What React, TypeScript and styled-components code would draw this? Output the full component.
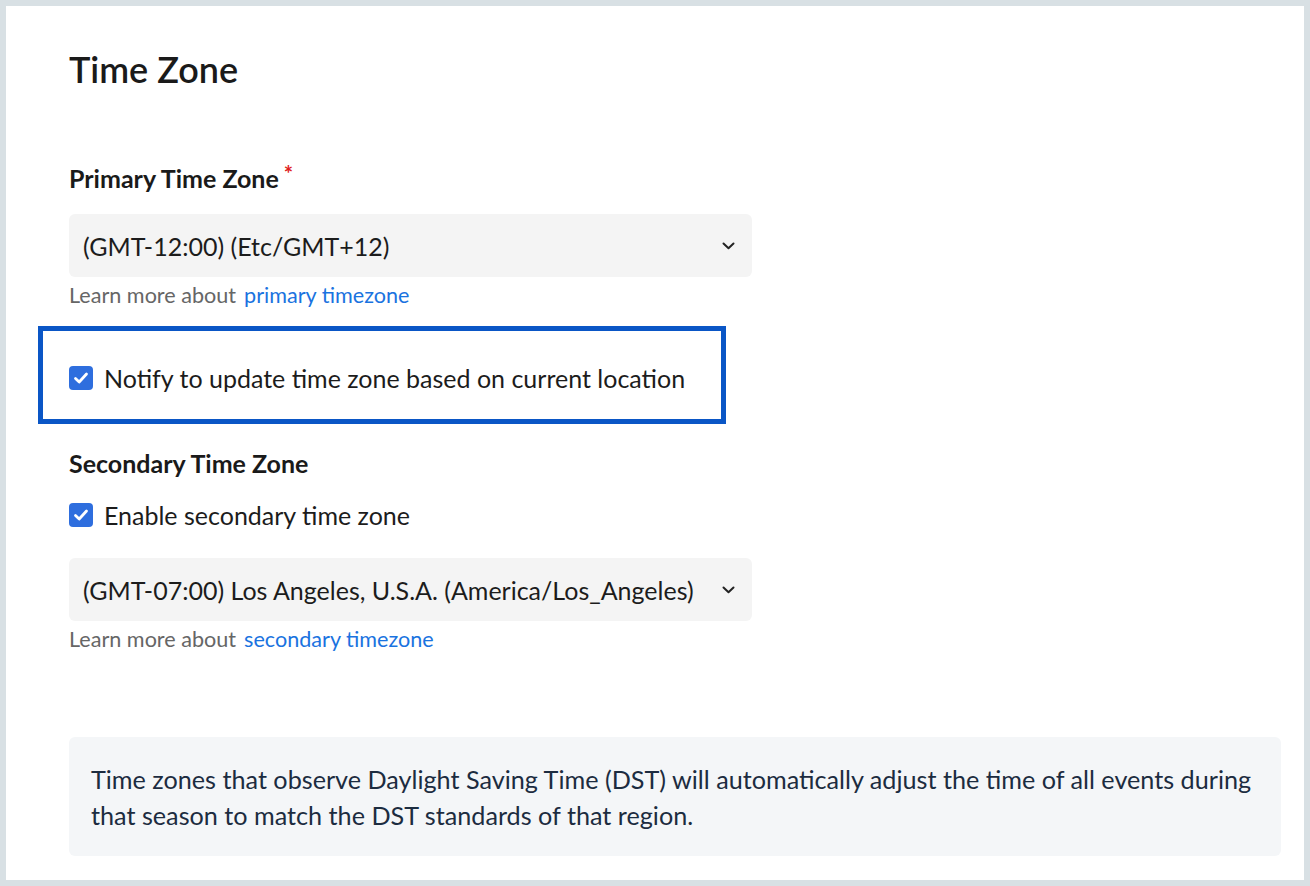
import styled, { createGlobalStyle } from 'styled-components';

const GlobalStyle = createGlobalStyle`
	html, body {
		margin: 0;
		padding: 0;
		background: #d8e0e4;
	}
	body {
		font-family: Lato, 'Noto Sans', sans-serif;
		color: #1c1c1c;
	}
`;

const Frame = styled.div`
	box-sizing: border-box;
	width: 1310px;
	height: 886px;
	padding: 6px;
	background: #d8e0e4;
`;

const Panel = styled.div`
	box-sizing: border-box;
	height: 100%;
	background: #fff;
	padding: 41px 23px 0 63px;
	display: flex;
	flex-direction: column;
`;

const Title = styled.h1`
	margin: 0;
	font-size: 36px;
	font-weight: 600;
	line-height: 44px;
	color: #1a1a1a;
`;

const Label = styled.div<{ $top: number }>`
	margin-top: ${(p) => p.$top}px;
	font-size: 25px;
	font-weight: 700;
	line-height: 30px;
	color: #1a1a1a;

	.label__required {
		color: #e0201b;
		font-size: 22px;
		font-weight: 700;
		margin-left: 5px;
		vertical-align: top;
		position: relative;
		top: -4px;
	}
`;

const Select = styled.div<{ $top: number }>`
	box-sizing: border-box;
	margin-top: ${(p) => p.$top}px;
	width: 683px;
	height: 63px;
	background: #f4f4f4;
	border-radius: 6px;
	padding: 0 17px 0 14px;
	display: flex;
	align-items: center;
	justify-content: space-between;
	font-size: 25px;
	color: #1c1c1c;

	svg {
		flex-shrink: 0;
	}
`;

const Hint = styled.div`
	margin-top: 4px;
	font-size: 21.6px;
	line-height: 28px;
	color: #666;

	a {
		color: #1a73e0;
		text-decoration: none;
		margin-left: 8px;
	}
`;

const Highlight = styled.div`
	box-sizing: border-box;
	margin: 17px 0 0 -31px;
	width: 688px;
	height: 98px;
	border: 5px solid #0a56c6;
	padding: 5px 0 0 26px;
	display: flex;
	align-items: center;
`;

const CheckRow = styled.label<{ $top?: number }>`
	margin-top: ${(p) => p.$top ?? 0}px;
	display: flex;
	align-items: center;
	gap: 11px;
	font-size: 25px;
	line-height: 30px;
	color: #1c1c1c;
`;

const Box = styled.span`
	width: 24px;
	height: 24px;
	border-radius: 4px;
	background: #2e6ede;
	display: inline-flex;
	align-items: center;
	justify-content: center;
	flex-shrink: 0;
`;

const Note = styled.div`
	box-sizing: border-box;
	margin-top: 84px;
	width: 1212px;
	height: 119px;
	background: #f4f6f8;
	border-radius: 6px;
	padding: 24px 22px;
	font-size: 25.2px;
	line-height: 36px;
	color: #1c2c40;
`;

const Chevron = () => (
	<svg width="13" height="8" viewBox="0 0 13 8">
		<path d="M1.5 1.5 L6.5 6.2 L11.5 1.5" fill="none" stroke="#222" strokeWidth="2" strokeLinecap="round" strokeLinejoin="round" />
	</svg>
);

const Check = () => (
	<Box>
		<svg width="16" height="14" viewBox="0 0 16 14">
			<path d="M2.5 7.5 L6.2 11 L13.5 3" fill="none" stroke="#fff" strokeWidth="2.8" strokeLinecap="round" strokeLinejoin="round" />
		</svg>
	</Box>
);

const App = () => {
	return (
		<>
			<GlobalStyle />
			<Frame>
				<Panel>
					<Title>Time Zone</Title>
					<Label $top={72}>
						Primary Time Zone<span className="label__required">*</span>
					</Label>
					<Select $top={21}>
						<span>(GMT-12:00) (Etc/GMT+12)</span>
						<Chevron />
					</Select>
					<Hint>
						Learn more about<a href="#">primary timezone</a>
					</Hint>
					<Highlight>
						<CheckRow>
							<Check />
							Notify to update time zone based on current location
						</CheckRow>
					</Highlight>
					<Label $top={24}>Secondary Time Zone</Label>
					<CheckRow $top={22}>
						<Check />
						Enable secondary time zone
					</CheckRow>
					<Select $top={28}>
						<span>(GMT-07:00) Los Angeles, U.S.A. (America/Los_Angeles)</span>
						<Chevron />
					</Select>
					<Hint>
						Learn more about<a href="#">secondary timezone</a>
					</Hint>
					<Note>
						Time zones that observe Daylight Saving Time (DST) will automatically adjust the time of all events during
						that season to match the DST standards of that region.
					</Note>
				</Panel>
			</Frame>
		</>
	);
};

export default App;
